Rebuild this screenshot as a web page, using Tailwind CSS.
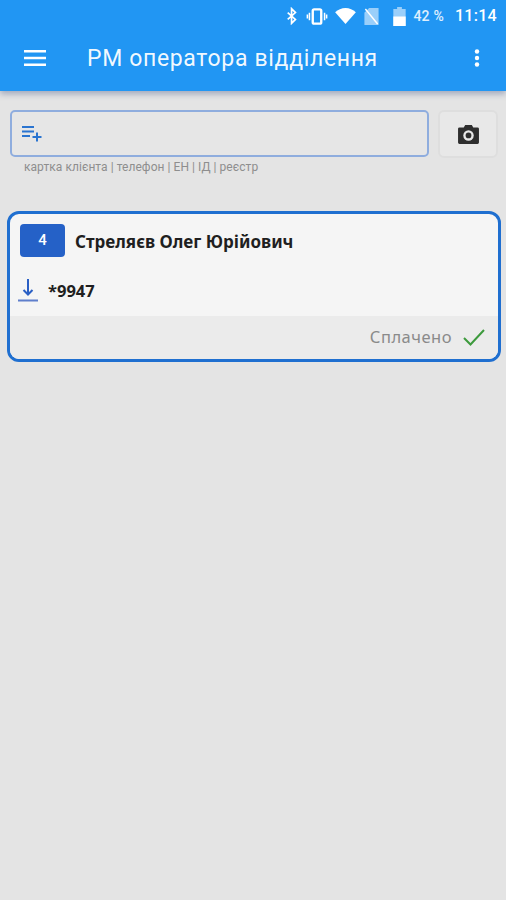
<!DOCTYPE html>
<html lang="uk">
  <head>
    <meta charset="UTF-8" />
    <meta name="viewport" content="width=device-width, initial-scale=1.0" />
    <script src="https://cdn.jsdelivr.net/npm/@tailwindcss/browser@4"></script>
    <title>РМ оператора відділення</title>
  </head>
  <body class="w-[506px] h-[900px] overflow-hidden bg-[#e4e4e4] font-['Roboto',sans-serif]">
    <!-- App bar -->
    <header class="h-[91px] bg-[#2196f3] text-white shadow-[0_3px_6px_rgba(60,80,130,0.4)]">
      <div class="h-[32px] flex items-center justify-end pr-[9px]">
        <svg class="w-[12px] h-[18px] mr-[8px]" viewBox="0 0 14 20" fill="none" stroke="white" stroke-width="2">
          <path d="M2 6l9 8-4.500 4.500V1.500L11 6l-9 8" />
        </svg>
        <svg class="w-[22px] h-[17px] mr-[7px]" viewBox="0 0 22 18" fill="none" stroke="white">
          <rect x="6.500" y="1.500" width="9" height="15" rx="1.500" stroke-width="2.500" />
          <path d="M3 5v8M0.800 7v4M19 5v8M21.200 7v4" stroke-width="1.600" />
        </svg>
        <svg class="w-[21px] h-[16px] mr-[8px]" viewBox="0 0 22 17" fill="white">
          <path d="M0 4.500C3 1.800 6.800 0 11 0s8 1.800 11 4.500L11 17z" />
        </svg>
        <svg class="w-[15px] h-[17px] mr-[14px]" viewBox="0 0 15 18">
          <path d="M5 0h10v18H0V5z" fill="white" fill-opacity="0.55" />
          <path d="M1 1l13 16" stroke="white" stroke-width="1.500" />
        </svg>
        <svg class="w-[13px] h-[19px] mr-[7px]" viewBox="0 0 13 20">
          <path d="M4 0h5v2h4v18H0V2h4z" fill="white" fill-opacity="0.55" />
          <path d="M0 10h13v10H0z" fill="white" />
        </svg>
        <span class="text-[14px] font-medium text-white/85 mr-[11px] tracking-[0.2px]">42 %</span>
        <span class="text-[16px] font-medium tracking-[0.3px]">11:14</span>
      </div>
      <div class="h-[52px] flex items-center">
        <svg class="w-[22px] h-[16px] ml-[24px]" viewBox="0 0 22 16" fill="white">
          <path d="M0 0h22v2.500H0zM0 6.700h22v2.500H0zM0 13.500h22V16H0z" />
        </svg>
        <h1 class="ml-[41px] pt-[2px] text-[23px] font-normal tracking-[0.65px] text-white/95">РМ оператора відділення</h1>
        <svg class="w-[6px] h-[18px] ml-auto mr-[26px]" viewBox="0 0 6 18" fill="white">
          <circle cx="3" cy="2.500" r="2.200" />
          <circle cx="3" cy="9" r="2.200" />
          <circle cx="3" cy="15.500" r="2.200" />
        </svg>
      </div>
    </header>

    <!-- Search -->
    <section class="flex items-start pt-[19px] pl-[10px] pr-[8px] gap-[9px]">
      <div class="flex-1">
        <div class="h-[47px] border-2 border-[#8fadde] rounded-[5px] bg-[#e6e6e6] flex items-center pl-[10px]">
          <svg class="w-[20px] h-[16px]" viewBox="0 0 20 16" fill="#2a74d0">
            <path d="M0 0h12v2H0zM0 4.500h12v2H0zM0 9h8v2H0zM14 6.500h2V10h3.500v2H16v3.500h-2V12h-3.500v-2H14z" />
          </svg>
        </div>
        <p class="mt-[3px] ml-[14px] text-[12px] leading-[14px] text-[#8e8e8e] tracking-[0.05px]">картка клієнта | телефон | ЕН | ІД | реєстр</p>
      </div>
      <div class="w-[60px] h-[48px] border-2 border-[#dedede] rounded-[6px] bg-[#e8e8e8] flex items-center justify-center">
        <svg class="w-[21px] h-[19px]" viewBox="0 0 22 20">
          <path d="M7.500 0h7L16 2.500h4.500A1.500 1.500 0 0 1 22 4v14.500a1.500 1.500 0 0 1-1.500 1.500h-19A1.500 1.500 0 0 1 0 18.500V4a1.500 1.500 0 0 1 1.500-1.500H6z" fill="#2e2e2e" />
          <circle cx="11" cy="11" r="5.500" fill="#e8e8e8" />
          <circle cx="11" cy="11" r="3" fill="#2e2e2e" />
        </svg>
      </div>
    </section>

    <!-- Card -->
    <article class="mt-[37px] ml-[7px] mr-[5px] h-[151px] border-[3px] border-[#1f6fd0] rounded-[12px] bg-[#f5f5f5] overflow-hidden flex flex-col">
      <div class="flex items-center pt-[10px] pl-[10px]">
        <div class="w-[45px] h-[33px] rounded-[4px] bg-[#2561c7] text-white text-[15px] font-medium flex items-center justify-center">4</div>
        <span class="ml-[10px] pt-[2px] text-[17px] font-bold text-[#1f1f1f] font-['Noto_Sans',sans-serif]">Стреляєв Олег Юрійович</span>
      </div>
      <div class="flex items-center mt-[20px] pl-[8px]">
        <svg class="w-[20px] h-[24px]" viewBox="0 0 20 24" fill="none" stroke="#2a5fc4" stroke-width="2">
          <path d="M10 1v15M5.500 12l4.500 4.500L14.500 12" />
          <path d="M0 22.500h20" stroke="#5f7fcc" />
        </svg>
        <span class="ml-[10px] pt-[2px] text-[16.500px] font-bold text-[#1f1f1f] font-['Noto_Sans',sans-serif]">*9947</span>
      </div>
      <div class="flex-1 mt-[12px] bg-[#ebebeb] flex items-center justify-end pr-[13px]">
        <span class="text-[16.500px] text-[#8a8a8a] tracking-[0.5px] font-['Noto_Sans',sans-serif]">Сплачено</span>
        <svg class="w-[22px] h-[17px] ml-[11px]" viewBox="0 0 22 17" fill="none" stroke="#3d9a3d" stroke-width="2">
          <path d="M1 9l6.500 6.500L21 1" />
        </svg>
      </div>
    </article>
  </body>
</html>
